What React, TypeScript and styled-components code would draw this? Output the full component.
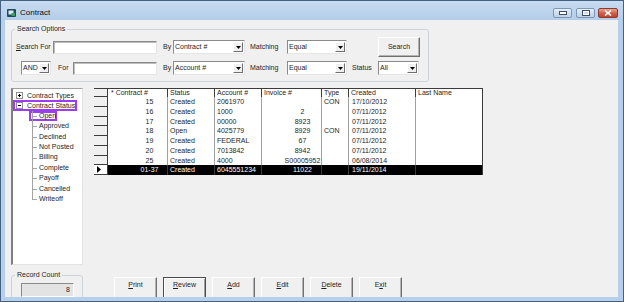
import React from "react";
import styled, { createGlobalStyle } from "styled-components";

const GlobalStyle = createGlobalStyle`
  html, body { margin: 0; padding: 0; background: #ffffff; }
  body { font-family: "Liberation Sans", Arial, sans-serif; font-size: 7px; color: #1e1e1e; }
  * { box-sizing: border-box; }
`;

const Window = styled.div`
  width: 624px;
  height: 302px;
  overflow: hidden;
  display: flex;
  flex-direction: column;
  border: 1px solid #45617f;
  background: #b6cfea;
`;

const TitleBar = styled.div`
  height: 19px;
  flex: none;
  display: flex;
  align-items: center;
  padding: 4px 5px 0 6px;
  background: linear-gradient(#c8dcf2, #b4cde9);
`;

const TitleText = styled.span`
  font-size: 8px;
  margin-left: 4px;
  color: #0c0c0c;
`;

const CaptionGroup = styled.div`
  margin-left: auto;
  display: flex;
  gap: 3px;
`;

const CaptionButton = styled.div<{ $close?: boolean; $w: number; $ml?: number }>`
  width: ${(p) => p.$w}px;
  height: 10px;
  margin-left: ${(p) => p.$ml ?? 0}px;
  border-radius: 2px;
  display: flex;
  align-items: center;
  justify-content: center;
  border: 1px solid ${(p) => (p.$close ? "#8a3b2c" : "#7d97b8")};
  background: ${(p) =>
    p.$close
      ? "linear-gradient(#eaa596, #d1614c 50%, #c2402c)"
      : "linear-gradient(#e8f0fa, #cfdded 50%, #bfd1e8)"};
`;

const Frame = styled.div`
  flex: 1;
  padding: 0 5px 4px 4px;
  display: flex;
  min-height: 0;
`;

const Client = styled.div`
  flex: 1;
  background: #f0f0f0;
  overflow: hidden;
  display: flex;
  flex-direction: column;
`;

const GroupBox = styled.fieldset<{ $w: number; $ml: number; $mt: number; $h?: number }>`
  margin: ${(p) => p.$mt}px 0 0 ${(p) => p.$ml}px;
  padding: 0;
  width: ${(p) => p.$w}px;
  ${(p) => (p.$h ? `height: ${p.$h}px;` : "")}
  min-width: 0;
  flex: none;
  border: 1px solid #cdd3d8;
  border-radius: 3px;
`;

const Legend = styled.legend`
  margin-left: 3px;
  padding: 0 2px;
  line-height: 8px;
  font-size: 7px;
`;

const SearchBody = styled.div`
  padding: 7px 0 6px 0;
  display: flex;
  flex-direction: column;
  gap: 7px;
`;

const FormRow = styled.div`
  display: flex;
  align-items: center;
  height: 14px;
`;

const Label = styled.span<{ $w: number; $ml?: number }>`
  width: ${(p) => p.$w}px;
  margin-left: ${(p) => p.$ml ?? 0}px;
  flex: none;
  white-space: nowrap;
  line-height: 8px;
`;

const U = styled.span`
  text-decoration: underline;
`;

const TextBox = styled.div<{ $w: number }>`
  width: ${(p) => p.$w}px;
  height: 13px;
  flex: none;
  background: #fff;
  border: 1px solid;
  border-color: #8a8a8a #e6e6e6 #e6e6e6 #8a8a8a;
  box-shadow: inset 1px 1px 0 #bdbdbd;
`;

const Combo = styled.div<{ $w: number; $ml?: number }>`
  width: ${(p) => p.$w}px;
  margin-left: ${(p) => p.$ml ?? 0}px;
  height: 14px;
  flex: none;
  display: flex;
  background: #fff;
  border: 1px solid;
  border-color: #8a8a8a #e6e6e6 #e6e6e6 #8a8a8a;
`;

const ComboValue = styled.span`
  flex: 1;
  min-width: 0;
  padding-left: 1px;
  line-height: 12px;
  white-space: nowrap;
`;

const ComboButton = styled.span`
  width: 10px;
  margin: 1px;
  flex: none;
  display: flex;
  align-items: center;
  justify-content: center;
  background: #f0f0f0;
  border: 1px solid;
  border-color: #ffffff #6f6f6f #6f6f6f #ffffff;
`;

const PushButton = styled.div<{ $w: number; $h: number; $ml?: number; $default?: boolean; $mv?: number }>`
  width: ${(p) => p.$w}px;
  height: ${(p) => p.$h}px;
  margin: ${(p) => p.$mv ?? 0}px 0 ${(p) => p.$mv ?? 0}px ${(p) => p.$ml ?? 0}px;
  flex: none;
  display: flex;
  justify-content: center;
  align-items: ${(p) => (p.$h > 21 ? "flex-start" : "center")};
  padding-top: ${(p) => (p.$h > 21 ? 3 : 0)}px;
  line-height: 8px;
  background: #f0f0f0;
  border: 1px solid;
  border-color: ${(p) => (p.$default ? "#4a4a4a" : "#ffffff #6f6f6f #6f6f6f #ffffff")};
  box-shadow: ${(p) =>
    p.$default ? "inset 1px 1px 0 #ffffff, inset -1px -1px 0 #a0a0a0" : "inset -1px -1px 0 #b4b4b4"};
`;

const MainRow = styled.div`
  margin-top: 6px;
  display: flex;
  align-items: flex-start;
  flex: none;
`;

const TreeBox = styled.div`
  margin-left: 6px;
  width: 72px;
  height: 177px;
  flex: none;
  background: #fff;
  border-style: solid;
  border-width: 1px 1px 1px 2px;
  border-color: #a0a0a0 #e3e3e3 #e3e3e3 #808080;
  padding-top: 1px;
  overflow: hidden;
`;

const TreeNode = styled.div<{ $hl?: boolean; $pr?: number }>`
  display: flex;
  align-items: center;
  width: fit-content;
  height: 10.4px;
  padding-left: 3px;
  padding-right: ${(p) => p.$pr ?? 0}px;
  white-space: nowrap;
  box-shadow: ${(p) => (p.$hl ? "inset 0 0 0 2px #9d3cf5" : "none")};
`;

const Expander = styled.svg`
  width: 7px;
  height: 7px;
  margin-right: 4px;
  flex: none;
`;

const TreeChildren = styled.div`
  margin-left: 16px;
`;

const ChildNode = styled.div<{ $hl?: boolean; $last?: boolean; $pr?: number }>`
  position: relative;
  width: fit-content;
  height: 10.4px;
  line-height: 10.4px;
  padding-left: 10px;
  padding-right: ${(p) => p.$pr ?? 0}px;
  white-space: nowrap;
  box-shadow: ${(p) => (p.$hl ? "inset 0 0 0 2px #9d3cf5" : "none")};
  &::before {
    content: "";
    position: absolute;
    left: 3px;
    top: 0;
    width: 1px;
    height: ${(p) => (p.$last ? "50%" : "100%")};
    background: #a4a4a4;
  }
  &::after {
    content: "";
    position: absolute;
    left: 3px;
    top: 50%;
    width: 5px;
    height: 1px;
    background: #a4a4a4;
  }
`;

const DataGrid = styled.div`
  margin-left: 11px;
  width: 389px;
  flex: none;
  display: grid;
  grid-template-columns: 14px 60px 47px 47px 60px 27px 67px 67px;
  grid-template-rows: 8px repeat(8, 9.75px);
  border-top: 1px solid #3c3c3c;
`;

const SelectorHead = styled.div`
  border-right: 1px solid #3c3c3c;
  border-bottom: 1px solid #3c3c3c;
`;

const HeadCell = styled.div<{ $pl?: number }>`
  background: #fff;
  border-right: 1px solid #3c3c3c;
  padding-left: ${(p) => p.$pl ?? 2}px;
  line-height: 8px;
  white-space: nowrap;
  overflow: hidden;
`;

const RowSelector = styled.div<{ $current?: boolean }>`
  background: ${(p) => (p.$current ? "#ffffff" : "transparent")};
  border-right: 1px solid #3c3c3c;
  border-bottom: 1px solid #3c3c3c;
  display: flex;
  align-items: center;
  padding-left: 3px;
`;

const Cell = styled.div<{ $sel?: boolean; $center?: boolean; $pl?: number; $last?: boolean }>`
  background: ${(p) => (p.$sel ? "#000" : "#fff")};
  color: ${(p) => (p.$sel ? "#fff" : "#1e1e1e")};
  border-right: 1px solid ${(p) => (p.$last ? "#3c3c3c" : p.$sel ? "#3a3a3a" : "#a0a0a0")};
  padding-left: ${(p) => p.$pl ?? 2}px;
  text-align: ${(p) => (p.$center ? "center" : "left")};
  line-height: 9.75px;
  white-space: nowrap;
  overflow: hidden;
`;

const BottomRow = styled.div`
  margin-top: 6px;
  display: flex;
  align-items: flex-start;
  flex: none;
`;

const CountBody = styled.div`
  padding: 4px 0 0 9px;
`;

const CountField = styled.div`
  width: 53px;
  height: 14px;
  background: #e3e3e3;
  border: 1px solid;
  border-color: #8a8a8a #ffffff #ffffff #8a8a8a;
  text-align: right;
  padding-right: 3px;
  line-height: 12px;
`;

const ButtonBar = styled.div`
  margin: 6px 0 0 31px;
  display: flex;
  gap: 6px;
`;

const Arrow = () => (
  <svg width="5" height="3" viewBox="0 0 5 3">
    <polygon points="0,0 5,0 2.5,3" fill="#000" />
  </svg>
);

const rows: string[][] = [
  ["15", "Created", "2061970", "", "CON", "17/10/2012", ""],
  ["16", "Created", "1000", "2", "", "07/11/2012", ""],
  ["17", "Created", "00000", "8923", "", "07/11/2012", ""],
  ["18", "Open", "4025779", "8929", "CON", "07/11/2012", ""],
  ["19", "Created", "FEDERAL", "67", "", "07/11/2012", ""],
  ["20", "Created", "7013842", "8942", "", "07/11/2012", ""],
  ["25", "Created", "4000", "S00005952", "", "06/08/2014", ""],
  ["01-37", "Created", "6045551234", "11022", "", "19/11/2014", ""],
];

const headers = ["* Contract #", "Status", "Account #", "Invoice #", "Type", "Created", "Last Name"];

const children = ["Open", "Approved", "Declined", "Not Posted", "Billing", "Complete", "Payoff", "Cancelled", "Writeoff"];

const cellPad = (ci: number) => (ci === 0 ? 24 : ci === 3 ? 22 : ci === 5 ? 3 : 2);

export default function App() {
  return (
    <>
      <GlobalStyle />
      <Window>
        <TitleBar>
          <svg width="9" height="8" viewBox="0 0 9 8">
            <rect x="0" y="0" width="9" height="8" rx="1" fill="#1e4a5a" />
            <rect x="1.5" y="1.5" width="5" height="4" fill="#dcecf2" />
            <rect x="4.5" y="4" width="3.5" height="3" fill="#3a9d5b" />
          </svg>
          <TitleText>Contract</TitleText>
          <CaptionGroup>
            <CaptionButton $w={19}>
              <svg width="8" height="4" viewBox="0 0 8 4">
                <rect x="0.5" y="0.5" width="7" height="3" fill="#fff" stroke="#3d4f66" />
              </svg>
            </CaptionButton>
            <CaptionButton $w={19} $ml={1}>
              <svg width="8" height="6" viewBox="0 0 8 6">
                <rect x="0.5" y="0.5" width="7" height="5" fill="none" stroke="#3d4f66" />
                <rect x="1.5" y="1.5" width="5" height="3" fill="none" stroke="#fff" />
              </svg>
            </CaptionButton>
            <CaptionButton $w={20} $close>
              <svg width="8" height="6" viewBox="0 0 8 6">
                <path d="M1 0.5 L7 5.5 M7 0.5 L1 5.5" stroke="#fff" strokeWidth="1.6" />
              </svg>
            </CaptionButton>
          </CaptionGroup>
        </TitleBar>
        <Frame>
          <Client>
            <GroupBox $w={418} $ml={6} $mt={5}>
              <Legend>Search Options</Legend>
              <SearchBody>
                <FormRow>
                  <Label $w={37} $ml={4}>
                    <U>S</U>earch For
                  </Label>
                  <TextBox $w={104} />
                  <Label $w={10} $ml={6}>By</Label>
                  <Combo $w={72}>
                    <ComboValue>Contract #</ComboValue>
                    <ComboButton><Arrow /></ComboButton>
                  </Combo>
                  <Label $w={37} $ml={5}>Matching</Label>
                  <Combo $w={60}>
                    <ComboValue>Equal</ComboValue>
                    <ComboButton><Arrow /></ComboButton>
                  </Combo>
                  <PushButton $w={42} $h={20} $ml={31} $mv={-3}>Search</PushButton>
                </FormRow>
                <FormRow>
                  <Combo $w={30} $ml={9}>
                    <ComboValue>AND</ComboValue>
                    <ComboButton><Arrow /></ComboButton>
                  </Combo>
                  <Label $w={15} $ml={7}>For</Label>
                  <TextBox $w={84} />
                  <Label $w={10} $ml={6}>By</Label>
                  <Combo $w={72}>
                    <ComboValue>Account #</ComboValue>
                    <ComboButton><Arrow /></ComboButton>
                  </Combo>
                  <Label $w={37} $ml={5}>Matching</Label>
                  <Combo $w={60}>
                    <ComboValue>Equal</ComboValue>
                    <ComboButton><Arrow /></ComboButton>
                  </Combo>
                  <Label $w={26} $ml={5}>Status</Label>
                  <Combo $w={41}>
                    <ComboValue>All</ComboValue>
                    <ComboButton><Arrow /></ComboButton>
                  </Combo>
                </FormRow>
              </SearchBody>
            </GroupBox>

            <MainRow>
              <TreeBox>
                <TreeNode>
                  <Expander viewBox="0 0 7 7">
                    <rect x="0.5" y="0.5" width="6" height="6" fill="#fff" stroke="#8f8f8f" />
                    <path d="M2 3.5 H5 M3.5 2 V5" stroke="#000" />
                  </Expander>
                  Contract Types
                </TreeNode>
                <TreeNode $hl $pr={2}>
                  <Expander viewBox="0 0 7 7">
                    <rect x="0.5" y="0.5" width="6" height="6" fill="#fff" stroke="#8f8f8f" />
                    <path d="M2 3.5 H5" stroke="#000" />
                  </Expander>
                  Contract Status
                </TreeNode>
                <TreeChildren>
                  {children.map((c, i) => (
                    <ChildNode key={c} $hl={i === 0} $pr={i === 0 ? 1 : 0} $last={i === children.length - 1}>
                      {c}
                    </ChildNode>
                  ))}
                </TreeChildren>
              </TreeBox>

              <DataGrid>
                <SelectorHead />
                {headers.map((h, i) => (
                  <HeadCell key={h} $pl={i === 0 ? 3 : 2}>
                    {h}
                  </HeadCell>
                ))}
                {rows.map((r, ri) => {
                  const sel = ri === rows.length - 1;
                  return (
                    <React.Fragment key={ri}>
                      <RowSelector $current={sel}>
                        {sel && (
                          <svg width="4" height="7" viewBox="0 0 4 7">
                            <polygon points="0,0 4,3.5 0,7" fill="#000" />
                          </svg>
                        )}
                      </RowSelector>
                      {r.map((v, ci) => (
                        <Cell
                          key={ci}
                          $sel={sel}
                          $center={ci === 0 || ci === 3}
                          $pl={cellPad(ci)}
                          $last={ci === r.length - 1}
                        >
                          {v}
                        </Cell>
                      ))}
                    </React.Fragment>
                  );
                })}
              </DataGrid>
            </MainRow>

            <BottomRow>
              <GroupBox $w={72} $ml={6} $mt={0} $h={34}>
                <Legend>Record Count</Legend>
                <CountBody>
                  <CountField>8</CountField>
                </CountBody>
              </GroupBox>
              <ButtonBar>
                <PushButton $w={43} $h={24}><span><U>P</U>rint</span></PushButton>
                <PushButton $w={43} $h={24} $default><span><U>R</U>eview</span></PushButton>
                <PushButton $w={43} $h={24}><span><U>A</U>dd</span></PushButton>
                <PushButton $w={43} $h={24}><span><U>E</U>dit</span></PushButton>
                <PushButton $w={43} $h={24}><span><U>D</U>elete</span></PushButton>
                <PushButton $w={43} $h={24}><span>E<U>x</U>it</span></PushButton>
              </ButtonBar>
            </BottomRow>
          </Client>
        </Frame>
      </Window>
    </>
  );
}
